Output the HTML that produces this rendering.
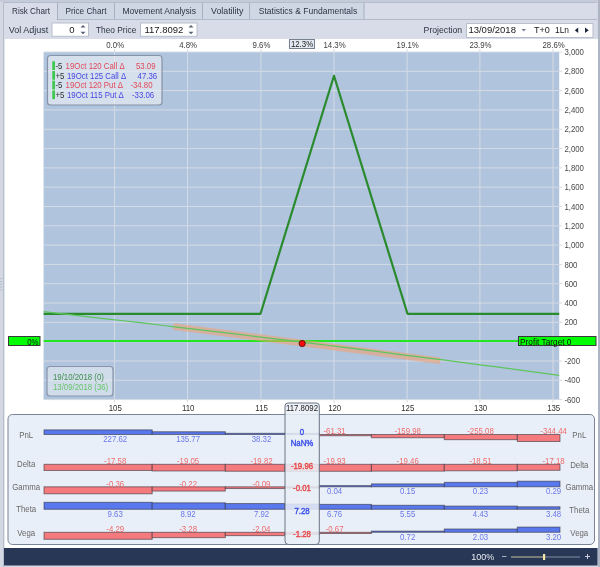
<!DOCTYPE html>
<html><head><meta charset="utf-8"><style>
html,body{margin:0;padding:0;width:600px;height:567px;overflow:hidden;background:#fff}
svg{display:block;will-change:transform}
text{font-family:"Liberation Sans", sans-serif}
</style></head><body>
<svg width="600" height="567" viewBox="0 0 600 567">
<rect x="0" y="0" width="600" height="567" fill="#d3d8e3" />
<rect x="0" y="0" width="600" height="2" fill="#c5cbd8" />
<rect x="4" y="2" width="593" height="37" fill="#d7dce8" />
<rect x="57" y="2" width="58" height="18" fill="#d0d7e4" />
<line x1="114.5" y1="2" x2="114.5" y2="20" stroke="#a9b1c1" stroke-width="1" />
<rect x="115" y="2" width="88" height="18" fill="#d0d7e4" />
<line x1="202.5" y1="2" x2="202.5" y2="20" stroke="#a9b1c1" stroke-width="1" />
<rect x="203" y="2" width="47" height="18" fill="#d0d7e4" />
<line x1="249.5" y1="2" x2="249.5" y2="20" stroke="#a9b1c1" stroke-width="1" />
<rect x="250" y="2" width="114.5" height="18" fill="#d0d7e4" />
<line x1="364.0" y1="2" x2="364.0" y2="20" stroke="#a9b1c1" stroke-width="1" />
<line x1="57" y1="19.5" x2="597" y2="19.5" stroke="#b2bac9" stroke-width="1" />
<line x1="4" y1="2.5" x2="597" y2="2.5" stroke="#b4bdcb" stroke-width="1" />
<line x1="57.5" y1="2" x2="57.5" y2="20" stroke="#a9b1c1" stroke-width="1" />
<text x="12" y="14.12" font-size="9" fill="#2c3444" text-anchor="start" font-weight="normal"  textLength="38" lengthAdjust="spacingAndGlyphs">Risk Chart</text>
<text x="65.5" y="14.12" font-size="9" fill="#2c3444" text-anchor="start" font-weight="normal"  textLength="41" lengthAdjust="spacingAndGlyphs">Price Chart</text>
<text x="122.5" y="14.12" font-size="9" fill="#2c3444" text-anchor="start" font-weight="normal"  textLength="73.5" lengthAdjust="spacingAndGlyphs">Movement Analysis</text>
<text x="211" y="14.12" font-size="9" fill="#2c3444" text-anchor="start" font-weight="normal"  textLength="32.3" lengthAdjust="spacingAndGlyphs">Volatility</text>
<text x="258.75" y="14.12" font-size="9" fill="#2c3444" text-anchor="start" font-weight="normal"  textLength="98.5" lengthAdjust="spacingAndGlyphs">Statistics &amp; Fundamentals</text>
<line x1="3.5" y1="2" x2="3.5" y2="567" stroke="#b6bdca" stroke-width="1" />
<rect x="598" y="0" width="2" height="567" fill="#adb5c4" />
<rect x="0" y="278" width="2" height="1.1" fill="#b9c1cd" />
<rect x="0" y="281" width="2" height="1.1" fill="#b9c1cd" />
<rect x="0" y="283.8" width="2" height="1.1" fill="#b9c1cd" />
<rect x="0" y="286.6" width="2" height="1.1" fill="#b9c1cd" />
<rect x="0" y="289.3" width="2" height="1.1" fill="#b9c1cd" />
<text x="8.7" y="32.82" font-size="9" fill="#2c3444" text-anchor="start" font-weight="normal" >Vol Adjust</text>
<rect x="52" y="23" width="36.5" height="13.3" fill="#ffffff" stroke="#b8bfcc" stroke-width="1" />
<text x="74.5" y="33.00" font-size="9.5" fill="#202020" text-anchor="end" font-weight="normal" >0</text>
<text x="96" y="32.82" font-size="9" fill="#2c3444" text-anchor="start" font-weight="normal"  textLength="40.3" lengthAdjust="spacingAndGlyphs">Theo Price</text>
<rect x="140.5" y="23" width="56.5" height="13.3" fill="#ffffff" stroke="#b8bfcc" stroke-width="1" />
<text x="144.4" y="33.00" font-size="9.5" fill="#202020" text-anchor="start" font-weight="normal" >117.8092</text>
<path d="M80.5,27.5 L83,25 L85.5,27.5 Z" fill="#566074"/>
<path d="M80.5,31.8 L83,34.3 L85.5,31.8 Z" fill="#566074"/>
<path d="M188.5,27.5 L191,25 L193.5,27.5 Z" fill="#566074"/>
<path d="M188.5,31.8 L191,34.3 L193.5,31.8 Z" fill="#566074"/>
<text x="423.6" y="32.82" font-size="9" fill="#2c3444" text-anchor="start" font-weight="normal"  textLength="38.6" lengthAdjust="spacingAndGlyphs">Projection</text>
<rect x="466.5" y="23.5" width="126.5" height="14" fill="#ffffff" stroke="#b8bfcc" stroke-width="1" />
<text x="468.4" y="33.00" font-size="9.5" fill="#202020" text-anchor="start" font-weight="normal" >13/09/2018</text>
<path d="M521.5,29 L526,29 L523.75,31.5 Z" fill="#7a8292"/>
<text x="534" y="33.00" font-size="9.5" fill="#202020" text-anchor="start" font-weight="normal"  textLength="15.8" lengthAdjust="spacingAndGlyphs">T+0</text>
<text x="555" y="33.00" font-size="9.5" fill="#202020" text-anchor="start" font-weight="normal"  textLength="14" lengthAdjust="spacingAndGlyphs">1Ln</text>
<path d="M578.2,27.5 L574.8,30.3 L578.2,33 Z" fill="#1a2438"/>
<path d="M585,27.5 L588.7,30.3 L585,33 Z" fill="#1a2438"/>
<rect x="4" y="39" width="594" height="509" fill="#ffffff" />
<rect x="4" y="39" width="1" height="509" fill="#e2e6ed" />
<rect x="43.6" y="52" width="515.6" height="347.6" fill="#b0c4de" />
<line x1="43.6" y1="52.0" x2="562.2" y2="52.0" stroke="#d5dbe4" stroke-width="1" />
<line x1="43.6" y1="71.31111111111112" x2="562.2" y2="71.31111111111112" stroke="#d5dbe4" stroke-width="1" />
<line x1="43.6" y1="90.62222222222223" x2="562.2" y2="90.62222222222223" stroke="#d5dbe4" stroke-width="1" />
<line x1="43.6" y1="109.93333333333334" x2="562.2" y2="109.93333333333334" stroke="#d5dbe4" stroke-width="1" />
<line x1="43.6" y1="129.24444444444447" x2="562.2" y2="129.24444444444447" stroke="#d5dbe4" stroke-width="1" />
<line x1="43.6" y1="148.55555555555557" x2="562.2" y2="148.55555555555557" stroke="#d5dbe4" stroke-width="1" />
<line x1="43.6" y1="167.86666666666667" x2="562.2" y2="167.86666666666667" stroke="#d5dbe4" stroke-width="1" />
<line x1="43.6" y1="187.1777777777778" x2="562.2" y2="187.1777777777778" stroke="#d5dbe4" stroke-width="1" />
<line x1="43.6" y1="206.4888888888889" x2="562.2" y2="206.4888888888889" stroke="#d5dbe4" stroke-width="1" />
<line x1="43.6" y1="225.8" x2="562.2" y2="225.8" stroke="#d5dbe4" stroke-width="1" />
<line x1="43.6" y1="245.11111111111114" x2="562.2" y2="245.11111111111114" stroke="#d5dbe4" stroke-width="1" />
<line x1="43.6" y1="264.4222222222222" x2="562.2" y2="264.4222222222222" stroke="#d5dbe4" stroke-width="1" />
<line x1="43.6" y1="283.73333333333335" x2="562.2" y2="283.73333333333335" stroke="#d5dbe4" stroke-width="1" />
<line x1="43.6" y1="303.0444444444445" x2="562.2" y2="303.0444444444445" stroke="#d5dbe4" stroke-width="1" />
<line x1="43.6" y1="322.3555555555556" x2="562.2" y2="322.3555555555556" stroke="#d5dbe4" stroke-width="1" />
<line x1="43.6" y1="341.6666666666667" x2="562.2" y2="341.6666666666667" stroke="#d5dbe4" stroke-width="1" />
<line x1="43.6" y1="360.9777777777778" x2="562.2" y2="360.9777777777778" stroke="#d5dbe4" stroke-width="1" />
<line x1="43.6" y1="380.28888888888895" x2="562.2" y2="380.28888888888895" stroke="#d5dbe4" stroke-width="1" />
<line x1="43.6" y1="399.6" x2="562.2" y2="399.6" stroke="#d5dbe4" stroke-width="1" />
<line x1="114.6" y1="49" x2="114.6" y2="402.5" stroke="#d5dbe4" stroke-width="1" />
<line x1="187.5" y1="49" x2="187.5" y2="402.5" stroke="#d5dbe4" stroke-width="1" />
<line x1="260.9" y1="49" x2="260.9" y2="402.5" stroke="#d5dbe4" stroke-width="1" />
<line x1="334.0" y1="49" x2="334.0" y2="402.5" stroke="#d5dbe4" stroke-width="1" />
<line x1="407.1" y1="49" x2="407.1" y2="402.5" stroke="#d5dbe4" stroke-width="1" />
<line x1="479.9" y1="49" x2="479.9" y2="402.5" stroke="#d5dbe4" stroke-width="1" />
<line x1="553.0" y1="49" x2="553.0" y2="402.5" stroke="#d5dbe4" stroke-width="1" />
<text x="564.4" y="55.11" font-size="8.7" fill="#4a4a4a" text-anchor="start" font-weight="normal" transform="matrix(0.9,0,0,1,56.440,0)" >3,000</text>
<text x="564.4" y="74.43" font-size="8.7" fill="#4a4a4a" text-anchor="start" font-weight="normal" transform="matrix(0.9,0,0,1,56.440,0)" >2,800</text>
<text x="564.4" y="93.74" font-size="8.7" fill="#4a4a4a" text-anchor="start" font-weight="normal" transform="matrix(0.9,0,0,1,56.440,0)" >2,600</text>
<text x="564.4" y="113.05" font-size="8.7" fill="#4a4a4a" text-anchor="start" font-weight="normal" transform="matrix(0.9,0,0,1,56.440,0)" >2,400</text>
<text x="564.4" y="132.36" font-size="8.7" fill="#4a4a4a" text-anchor="start" font-weight="normal" transform="matrix(0.9,0,0,1,56.440,0)" >2,200</text>
<text x="564.4" y="151.67" font-size="8.7" fill="#4a4a4a" text-anchor="start" font-weight="normal" transform="matrix(0.9,0,0,1,56.440,0)" >2,000</text>
<text x="564.4" y="170.98" font-size="8.7" fill="#4a4a4a" text-anchor="start" font-weight="normal" transform="matrix(0.9,0,0,1,56.440,0)" >1,800</text>
<text x="564.4" y="190.29" font-size="8.7" fill="#4a4a4a" text-anchor="start" font-weight="normal" transform="matrix(0.9,0,0,1,56.440,0)" >1,600</text>
<text x="564.4" y="209.60" font-size="8.7" fill="#4a4a4a" text-anchor="start" font-weight="normal" transform="matrix(0.9,0,0,1,56.440,0)" >1,400</text>
<text x="564.4" y="228.91" font-size="8.7" fill="#4a4a4a" text-anchor="start" font-weight="normal" transform="matrix(0.9,0,0,1,56.440,0)" >1,200</text>
<text x="564.4" y="248.23" font-size="8.7" fill="#4a4a4a" text-anchor="start" font-weight="normal" transform="matrix(0.9,0,0,1,56.440,0)" >1,000</text>
<text x="564.4" y="267.54" font-size="8.7" fill="#4a4a4a" text-anchor="start" font-weight="normal" transform="matrix(0.9,0,0,1,56.440,0)" >800</text>
<text x="564.4" y="286.85" font-size="8.7" fill="#4a4a4a" text-anchor="start" font-weight="normal" transform="matrix(0.9,0,0,1,56.440,0)" >600</text>
<text x="564.4" y="306.16" font-size="8.7" fill="#4a4a4a" text-anchor="start" font-weight="normal" transform="matrix(0.9,0,0,1,56.440,0)" >400</text>
<text x="564.4" y="325.47" font-size="8.7" fill="#4a4a4a" text-anchor="start" font-weight="normal" transform="matrix(0.9,0,0,1,56.440,0)" >200</text>
<text x="564.4" y="344.78" font-size="8.7" fill="#4a4a4a" text-anchor="start" font-weight="normal" transform="matrix(0.9,0,0,1,56.440,0)" >0</text>
<text x="564.4" y="364.09" font-size="8.7" fill="#4a4a4a" text-anchor="start" font-weight="normal" transform="matrix(0.9,0,0,1,56.440,0)" >-200</text>
<text x="564.4" y="383.40" font-size="8.7" fill="#4a4a4a" text-anchor="start" font-weight="normal" transform="matrix(0.9,0,0,1,56.440,0)" >-400</text>
<text x="564.4" y="402.71" font-size="8.7" fill="#4a4a4a" text-anchor="start" font-weight="normal" transform="matrix(0.9,0,0,1,56.440,0)" >-600</text>
<text x="115.19999999999999" y="47.61" font-size="8.7" fill="#404040" text-anchor="middle" font-weight="normal" transform="matrix(0.9,0,0,1,11.520,0)" >0.0%</text>
<text x="188.1" y="47.61" font-size="8.7" fill="#404040" text-anchor="middle" font-weight="normal" transform="matrix(0.9,0,0,1,18.810,0)" >4.8%</text>
<text x="261.5" y="47.61" font-size="8.7" fill="#404040" text-anchor="middle" font-weight="normal" transform="matrix(0.9,0,0,1,26.150,0)" >9.6%</text>
<text x="334.6" y="47.61" font-size="8.7" fill="#404040" text-anchor="middle" font-weight="normal" transform="matrix(0.9,0,0,1,33.460,0)" >14.3%</text>
<text x="407.70000000000005" y="47.61" font-size="8.7" fill="#404040" text-anchor="middle" font-weight="normal" transform="matrix(0.9,0,0,1,40.770,0)" >19.1%</text>
<text x="480.5" y="47.61" font-size="8.7" fill="#404040" text-anchor="middle" font-weight="normal" transform="matrix(0.9,0,0,1,48.050,0)" >23.9%</text>
<text x="553.6" y="47.61" font-size="8.7" fill="#404040" text-anchor="middle" font-weight="normal" transform="matrix(0.9,0,0,1,55.360,0)" >28.6%</text>
<text x="115.3" y="411.41" font-size="8.7" fill="#303030" text-anchor="middle" font-weight="normal" transform="matrix(0.9,0,0,1,11.530,0)" >105</text>
<text x="188.2" y="411.41" font-size="8.7" fill="#303030" text-anchor="middle" font-weight="normal" transform="matrix(0.9,0,0,1,18.820,0)" >110</text>
<text x="261.59999999999997" y="411.41" font-size="8.7" fill="#303030" text-anchor="middle" font-weight="normal" transform="matrix(0.9,0,0,1,26.160,0)" >115</text>
<text x="334.7" y="411.41" font-size="8.7" fill="#303030" text-anchor="middle" font-weight="normal" transform="matrix(0.9,0,0,1,33.470,0)" >120</text>
<text x="407.8" y="411.41" font-size="8.7" fill="#303030" text-anchor="middle" font-weight="normal" transform="matrix(0.9,0,0,1,40.780,0)" >125</text>
<text x="480.59999999999997" y="411.41" font-size="8.7" fill="#303030" text-anchor="middle" font-weight="normal" transform="matrix(0.9,0,0,1,48.060,0)" >130</text>
<text x="553.7" y="411.41" font-size="8.7" fill="#303030" text-anchor="middle" font-weight="normal" transform="matrix(0.9,0,0,1,55.370,0)" >135</text>
<rect x="289.5" y="39.5" width="25" height="9" fill="#e4eaf3" stroke="#76808f" stroke-width="1" />
<text x="302" y="47.31" font-size="8.7" fill="#202020" text-anchor="middle" font-weight="normal" transform="matrix(0.9,0,0,1,30.200,0)" >12.3%</text>
<polyline points="43.6,313.8 260.5,313.8 334.0,75.8 407.5,313.8 559.2,313.8" fill="none" stroke="#2a8a2e" stroke-width="2.2" stroke-linejoin="round"/>
<line x1="43.6" y1="341" x2="518" y2="341" stroke="#22e622" stroke-width="2" />
<line x1="173.3" y1="326.5" x2="440.3" y2="360.8" stroke="rgba(245,158,105,0.55)" stroke-width="6.5" />
<polyline points="43.6,311.69 56.5,313.14 69.4,314.60 82.3,316.06 95.2,317.53 108.1,319.01 120.9,320.50 133.8,321.99 146.7,323.49 159.6,325.00 172.5,326.51 185.4,328.04 198.3,329.57 211.2,331.10 224.1,332.65 236.9,334.20 249.8,335.75 262.7,337.32 275.6,338.89 288.5,340.47 301.4,342.06 314.3,343.65 327.2,345.25 340.1,346.86 353.0,348.47 365.9,350.10 378.7,351.73 391.6,353.36 404.5,355.01 417.4,356.66 430.3,358.32 443.2,359.98 456.1,361.65 469.0,363.33 481.9,365.02 494.8,366.71 507.6,368.42 520.5,370.12 533.4,371.84 546.3,373.56 559.2,375.29" fill="none" stroke="#5ec45e" stroke-width="1.25"/>
<rect x="8.5" y="336.5" width="31.5" height="9" fill="#00ff00" stroke="#3a3a3a" stroke-width="1" />
<text x="38.5" y="344.91" font-size="8.7" fill="#101010" text-anchor="end" font-weight="normal" transform="matrix(0.9,0,0,1,3.850,0)" >0%</text>
<rect x="518.5" y="336.5" width="77.5" height="9" fill="#00ff00" stroke="#3a3a3a" stroke-width="1" />
<text x="520" y="344.71" font-size="8.7" fill="#101010" text-anchor="start" font-weight="normal"  textLength="51.5" lengthAdjust="spacingAndGlyphs">Profit Target 0</text>
<circle cx="302.2" cy="343.5" r="3.1" fill="#ff0a0a" stroke="#4a1010" stroke-width="0.9"/>
<rect x="47.5" y="55.5" width="114.5" height="49.5" fill="rgba(236,240,246,0.62)" stroke="#8592a8" stroke-width="1.2" rx="3" />
<rect x="52.3" y="61.3" width="2.7" height="8.7" fill="#3ec84e" />
<text x="55.4" y="69.11" font-size="8.7" fill="#303030" text-anchor="start" font-weight="normal" transform="matrix(0.9,0,0,1,5.540,0)" >-5</text>
<text x="65.6" y="69.11" font-size="8.7" fill="#e2485a" text-anchor="start" font-weight="normal" transform="matrix(0.9,0,0,1,6.560,0)" >19Oct 120 Call Δ</text>
<text x="136" y="69.11" font-size="8.7" fill="#e2485a" text-anchor="start" font-weight="normal" transform="matrix(0.9,0,0,1,13.600,0)" >53.09</text>
<rect x="52.3" y="71.0" width="2.7" height="8.7" fill="#3ec84e" />
<text x="55.4" y="78.81" font-size="8.7" fill="#303030" text-anchor="start" font-weight="normal" transform="matrix(0.9,0,0,1,5.540,0)" >+5</text>
<text x="67" y="78.81" font-size="8.7" fill="#4848e2" text-anchor="start" font-weight="normal" transform="matrix(0.9,0,0,1,6.700,0)" >19Oct 125 Call Δ</text>
<text x="137.6" y="78.81" font-size="8.7" fill="#4848e2" text-anchor="start" font-weight="normal" transform="matrix(0.9,0,0,1,13.760,0)" >47.36</text>
<rect x="52.3" y="80.7" width="2.7" height="8.7" fill="#3ec84e" />
<text x="55.4" y="88.51" font-size="8.7" fill="#303030" text-anchor="start" font-weight="normal" transform="matrix(0.9,0,0,1,5.540,0)" >-5</text>
<text x="65.6" y="88.51" font-size="8.7" fill="#e2485a" text-anchor="start" font-weight="normal" transform="matrix(0.9,0,0,1,6.560,0)" >19Oct 120 Put Δ</text>
<text x="130.4" y="88.51" font-size="8.7" fill="#e2485a" text-anchor="start" font-weight="normal" transform="matrix(0.9,0,0,1,13.040,0)" >-34.80</text>
<rect x="52.3" y="90.39999999999999" width="2.7" height="8.7" fill="#3ec84e" />
<text x="55.4" y="98.21" font-size="8.7" fill="#303030" text-anchor="start" font-weight="normal" transform="matrix(0.9,0,0,1,5.540,0)" >+5</text>
<text x="67" y="98.21" font-size="8.7" fill="#4848e2" text-anchor="start" font-weight="normal" transform="matrix(0.9,0,0,1,6.700,0)" >19Oct 115 Put Δ</text>
<text x="132" y="98.21" font-size="8.7" fill="#4848e2" text-anchor="start" font-weight="normal" transform="matrix(0.9,0,0,1,13.200,0)" >-33.06</text>
<rect x="47" y="366.5" width="66" height="29.5" fill="rgba(236,240,246,0.55)" stroke="#8694ac" stroke-width="1.2" rx="3" />
<text x="53" y="379.61" font-size="8.7" fill="#3e8e4e" text-anchor="start" font-weight="normal" transform="matrix(0.9,0,0,1,5.300,0)" >19/10/2018 (0)</text>
<text x="53" y="389.61" font-size="8.7" fill="#66c46a" text-anchor="start" font-weight="normal" transform="matrix(0.9,0,0,1,5.300,0)" >13/09/2018 (36)</text>
<rect x="8" y="414.5" width="586.5" height="130" fill="#e9eff8" stroke="#7a8494" stroke-width="1" rx="4.5" />
<rect x="44" y="429.8741145047033" width="108.19999999999999" height="4.625885495296713" fill="#5a78ee" stroke="rgba(40,40,50,0.55)" stroke-width="1" />
<rect x="152.2" y="431.74076762280805" width="73.10000000000002" height="2.759232377191964" fill="#5a78ee" stroke="rgba(40,40,50,0.55)" stroke-width="1" />
<rect x="225.3" y="433.3" width="59.69999999999999" height="1.2" fill="#5a78ee" stroke="rgba(40,40,50,0.55)" stroke-width="1" />
<rect x="285" y="433.3" width="34.30000000000001" height="1.2" fill="#5a78ee" stroke="rgba(40,40,50,0.55)" stroke-width="1" />
<rect x="319.3" y="434.5" width="52.099999999999966" height="1.24599349669028" fill="#f47a7e" stroke="rgba(40,40,50,0.55)" stroke-width="1" />
<rect x="371.4" y="434.5" width="72.90000000000003" height="3.2512484032052025" fill="#f47a7e" stroke="rgba(40,40,50,0.55)" stroke-width="1" />
<rect x="444.3" y="434.5" width="72.99999999999994" height="5.183950760654977" fill="#f47a7e" stroke="rgba(40,40,50,0.55)" stroke-width="1" />
<rect x="517.3" y="434.5" width="42.700000000000045" height="7.0" fill="#f47a7e" stroke="rgba(40,40,50,0.55)" stroke-width="1" />
<text x="26.2" y="437.71" font-size="8.7" fill="#686868" text-anchor="middle" font-weight="normal" transform="matrix(0.9,0,0,1,2.620,0)" >PnL</text>
<text x="579.3" y="437.81" font-size="8.7" fill="#686868" text-anchor="middle" font-weight="normal" transform="matrix(0.9,0,0,1,57.930,0)" >PnL</text>
<rect x="44" y="464.3" width="108.19999999999999" height="6.174611138986451" fill="#f47a7e" stroke="rgba(40,40,50,0.55)" stroke-width="1" />
<rect x="152.2" y="464.3" width="73.10000000000002" height="6.690918213748119" fill="#f47a7e" stroke="rgba(40,40,50,0.55)" stroke-width="1" />
<rect x="225.3" y="464.3" width="59.69999999999999" height="6.961364776718515" fill="#f47a7e" stroke="rgba(40,40,50,0.55)" stroke-width="1" />
<rect x="285" y="464.3" width="34.30000000000001" height="7.010536879076769" fill="#f47a7e" stroke="rgba(40,40,50,0.55)" stroke-width="1" />
<rect x="319.3" y="464.3" width="52.099999999999966" height="7.0" fill="#f47a7e" stroke="rgba(40,40,50,0.55)" stroke-width="1" />
<rect x="371.4" y="464.3" width="72.90000000000003" height="6.834922227797291" fill="#f47a7e" stroke="rgba(40,40,50,0.55)" stroke-width="1" />
<rect x="444.3" y="464.3" width="72.99999999999994" height="6.501254390366283" fill="#f47a7e" stroke="rgba(40,40,50,0.55)" stroke-width="1" />
<rect x="517.3" y="464.3" width="42.700000000000045" height="6.03411941796287" fill="#f47a7e" stroke="rgba(40,40,50,0.55)" stroke-width="1" />
<text x="26.2" y="467.51" font-size="8.7" fill="#686868" text-anchor="middle" font-weight="normal" transform="matrix(0.9,0,0,1,2.620,0)" >Delta</text>
<text x="579.3" y="467.61" font-size="8.7" fill="#686868" text-anchor="middle" font-weight="normal" transform="matrix(0.9,0,0,1,57.930,0)" >Delta</text>
<rect x="44" y="486.8" width="108.19999999999999" height="7.0" fill="#f47a7e" stroke="rgba(40,40,50,0.55)" stroke-width="1" />
<rect x="152.2" y="486.8" width="73.10000000000002" height="4.277777777777779" fill="#f47a7e" stroke="rgba(40,40,50,0.55)" stroke-width="1" />
<rect x="225.3" y="486.8" width="59.69999999999999" height="1.75" fill="#f47a7e" stroke="rgba(40,40,50,0.55)" stroke-width="1" />
<rect x="285" y="486.8" width="34.30000000000001" height="1.2" fill="#f47a7e" stroke="rgba(40,40,50,0.55)" stroke-width="1" />
<rect x="319.3" y="485.6" width="52.099999999999966" height="1.2" fill="#5a78ee" stroke="rgba(40,40,50,0.55)" stroke-width="1" />
<rect x="371.4" y="483.8833333333333" width="72.90000000000003" height="2.916666666666667" fill="#5a78ee" stroke="rgba(40,40,50,0.55)" stroke-width="1" />
<rect x="444.3" y="482.3277777777778" width="72.99999999999994" height="4.472222222222222" fill="#5a78ee" stroke="rgba(40,40,50,0.55)" stroke-width="1" />
<rect x="517.3" y="481.1611111111111" width="42.700000000000045" height="5.638888888888889" fill="#5a78ee" stroke="rgba(40,40,50,0.55)" stroke-width="1" />
<text x="26.2" y="490.01" font-size="8.7" fill="#686868" text-anchor="middle" font-weight="normal" transform="matrix(0.9,0,0,1,2.620,0)" >Gamma</text>
<text x="579.3" y="490.11" font-size="8.7" fill="#686868" text-anchor="middle" font-weight="normal" transform="matrix(0.9,0,0,1,57.930,0)" >Gamma</text>
<rect x="44" y="502.3" width="108.19999999999999" height="7.0" fill="#5a78ee" stroke="rgba(40,40,50,0.55)" stroke-width="1" />
<rect x="152.2" y="502.8160955347871" width="73.10000000000002" height="6.483904465212876" fill="#5a78ee" stroke="rgba(40,40,50,0.55)" stroke-width="1" />
<rect x="225.3" y="503.5429906542056" width="59.69999999999999" height="5.757009345794392" fill="#5a78ee" stroke="rgba(40,40,50,0.55)" stroke-width="1" />
<rect x="285" y="504.00820353063347" width="34.30000000000001" height="5.291796469366563" fill="#5a78ee" stroke="rgba(40,40,50,0.55)" stroke-width="1" />
<rect x="319.3" y="504.38618899273104" width="52.099999999999966" height="4.913811007268951" fill="#5a78ee" stroke="rgba(40,40,50,0.55)" stroke-width="1" />
<rect x="371.4" y="505.26573208722743" width="72.90000000000003" height="4.034267912772585" fill="#5a78ee" stroke="rgba(40,40,50,0.55)" stroke-width="1" />
<rect x="444.3" y="506.0798546209761" width="72.99999999999994" height="3.220145379023883" fill="#5a78ee" stroke="rgba(40,40,50,0.55)" stroke-width="1" />
<rect x="517.3" y="506.7704049844237" width="42.700000000000045" height="2.529595015576324" fill="#5a78ee" stroke="rgba(40,40,50,0.55)" stroke-width="1" />
<text x="26.2" y="512.51" font-size="8.7" fill="#686868" text-anchor="middle" font-weight="normal" transform="matrix(0.9,0,0,1,2.620,0)" >Theta</text>
<text x="579.3" y="512.61" font-size="8.7" fill="#686868" text-anchor="middle" font-weight="normal" transform="matrix(0.9,0,0,1,57.930,0)" >Theta</text>
<rect x="44" y="532.3" width="108.19999999999999" height="7.0" fill="#f47a7e" stroke="rgba(40,40,50,0.55)" stroke-width="1" />
<rect x="152.2" y="532.3" width="73.10000000000002" height="5.351981351981352" fill="#f47a7e" stroke="rgba(40,40,50,0.55)" stroke-width="1" />
<rect x="225.3" y="532.3" width="59.69999999999999" height="3.3286713286713288" fill="#f47a7e" stroke="rgba(40,40,50,0.55)" stroke-width="1" />
<rect x="285" y="532.3" width="34.30000000000001" height="2.0885780885780885" fill="#f47a7e" stroke="rgba(40,40,50,0.55)" stroke-width="1" />
<rect x="319.3" y="532.3" width="52.099999999999966" height="1.2" fill="#f47a7e" stroke="rgba(40,40,50,0.55)" stroke-width="1" />
<rect x="371.4" y="531.0999999999999" width="72.90000000000003" height="1.2" fill="#5a78ee" stroke="rgba(40,40,50,0.55)" stroke-width="1" />
<rect x="444.3" y="528.9876456876457" width="72.99999999999994" height="3.312354312354312" fill="#5a78ee" stroke="rgba(40,40,50,0.55)" stroke-width="1" />
<rect x="517.3" y="527.0785547785547" width="42.700000000000045" height="5.221445221445222" fill="#5a78ee" stroke="rgba(40,40,50,0.55)" stroke-width="1" />
<text x="26.2" y="535.51" font-size="8.7" fill="#686868" text-anchor="middle" font-weight="normal" transform="matrix(0.9,0,0,1,2.620,0)" >Vega</text>
<text x="579.3" y="535.61" font-size="8.7" fill="#686868" text-anchor="middle" font-weight="normal" transform="matrix(0.9,0,0,1,57.930,0)" >Vega</text>
<path d="M285,541 L285,406 Q285,403 288,403 L316.3,403 Q319.3,403 319.3,406 L319.3,541 Q319.3,544.5 316,544.5 L288.5,544.5 Q285,544.5 285,541 Z" fill="rgba(233,239,247,0.86)" stroke="#6a7484" stroke-width="1"/>
<text x="302" y="411.41" font-size="8.7" fill="#202020" text-anchor="middle" font-weight="normal" transform="matrix(0.9,0,0,1,30.200,0)" >117.8092</text>
<text x="115.2" y="442.11" font-size="8.7" fill="#6a78ea" text-anchor="middle" font-weight="normal" transform="matrix(0.9,0,0,1,11.520,0)" >227.62</text>
<text x="188.1" y="442.11" font-size="8.7" fill="#6a78ea" text-anchor="middle" font-weight="normal" transform="matrix(0.9,0,0,1,18.810,0)" >135.77</text>
<text x="261.5" y="442.11" font-size="8.7" fill="#6a78ea" text-anchor="middle" font-weight="normal" transform="matrix(0.9,0,0,1,26.150,0)" >38.32</text>
<text x="302" y="435.11" font-size="8.7" fill="#3a4ee8" text-anchor="middle" font-weight="normal" transform="matrix(0.9,0,0,1,30.200,0)" stroke="#3a4ee8" stroke-width="0.4">0</text>
<text x="302" y="445.81" font-size="8.7" fill="#3a4ee8" text-anchor="middle" font-weight="normal" transform="matrix(0.9,0,0,1,30.200,0)" stroke="#3a4ee8" stroke-width="0.4">NaN%</text>
<text x="334.6" y="434.31" font-size="8.7" fill="#ee6a6a" text-anchor="middle" font-weight="normal" transform="matrix(0.9,0,0,1,33.460,0)" >-61.31</text>
<text x="407.7" y="434.31" font-size="8.7" fill="#ee6a6a" text-anchor="middle" font-weight="normal" transform="matrix(0.9,0,0,1,40.770,0)" >-159.98</text>
<text x="480.5" y="434.31" font-size="8.7" fill="#ee6a6a" text-anchor="middle" font-weight="normal" transform="matrix(0.9,0,0,1,48.050,0)" >-255.08</text>
<text x="553.6" y="434.31" font-size="8.7" fill="#ee6a6a" text-anchor="middle" font-weight="normal" transform="matrix(0.9,0,0,1,55.360,0)" >-344.44</text>
<text x="115.2" y="464.11" font-size="8.7" fill="#ee6a6a" text-anchor="middle" font-weight="normal" transform="matrix(0.9,0,0,1,11.520,0)" >-17.58</text>
<text x="188.1" y="464.11" font-size="8.7" fill="#ee6a6a" text-anchor="middle" font-weight="normal" transform="matrix(0.9,0,0,1,18.810,0)" >-19.05</text>
<text x="261.5" y="464.11" font-size="8.7" fill="#ee6a6a" text-anchor="middle" font-weight="normal" transform="matrix(0.9,0,0,1,26.150,0)" >-19.82</text>
<text x="302" y="468.61" font-size="8.7" fill="#e84848" text-anchor="middle" font-weight="normal" transform="matrix(0.9,0,0,1,30.200,0)" stroke="#e84848" stroke-width="0.4">-19.96</text>
<text x="334.6" y="464.11" font-size="8.7" fill="#ee6a6a" text-anchor="middle" font-weight="normal" transform="matrix(0.9,0,0,1,33.460,0)" >-19.93</text>
<text x="407.7" y="464.11" font-size="8.7" fill="#ee6a6a" text-anchor="middle" font-weight="normal" transform="matrix(0.9,0,0,1,40.770,0)" >-19.46</text>
<text x="480.5" y="464.11" font-size="8.7" fill="#ee6a6a" text-anchor="middle" font-weight="normal" transform="matrix(0.9,0,0,1,48.050,0)" >-18.51</text>
<text x="553.6" y="464.11" font-size="8.7" fill="#ee6a6a" text-anchor="middle" font-weight="normal" transform="matrix(0.9,0,0,1,55.360,0)" >-17.18</text>
<text x="115.2" y="486.61" font-size="8.7" fill="#ee6a6a" text-anchor="middle" font-weight="normal" transform="matrix(0.9,0,0,1,11.520,0)" >-0.36</text>
<text x="188.1" y="486.61" font-size="8.7" fill="#ee6a6a" text-anchor="middle" font-weight="normal" transform="matrix(0.9,0,0,1,18.810,0)" >-0.22</text>
<text x="261.5" y="486.61" font-size="8.7" fill="#ee6a6a" text-anchor="middle" font-weight="normal" transform="matrix(0.9,0,0,1,26.150,0)" >-0.09</text>
<text x="302" y="491.11" font-size="8.7" fill="#e84848" text-anchor="middle" font-weight="normal" transform="matrix(0.9,0,0,1,30.200,0)" stroke="#e84848" stroke-width="0.4">-0.01</text>
<text x="334.6" y="494.41" font-size="8.7" fill="#6a78ea" text-anchor="middle" font-weight="normal" transform="matrix(0.9,0,0,1,33.460,0)" >0.04</text>
<text x="407.7" y="494.41" font-size="8.7" fill="#6a78ea" text-anchor="middle" font-weight="normal" transform="matrix(0.9,0,0,1,40.770,0)" >0.15</text>
<text x="480.5" y="494.41" font-size="8.7" fill="#6a78ea" text-anchor="middle" font-weight="normal" transform="matrix(0.9,0,0,1,48.050,0)" >0.23</text>
<text x="553.6" y="494.41" font-size="8.7" fill="#6a78ea" text-anchor="middle" font-weight="normal" transform="matrix(0.9,0,0,1,55.360,0)" >0.29</text>
<text x="115.2" y="516.91" font-size="8.7" fill="#6a78ea" text-anchor="middle" font-weight="normal" transform="matrix(0.9,0,0,1,11.520,0)" >9.63</text>
<text x="188.1" y="516.91" font-size="8.7" fill="#6a78ea" text-anchor="middle" font-weight="normal" transform="matrix(0.9,0,0,1,18.810,0)" >8.92</text>
<text x="261.5" y="516.91" font-size="8.7" fill="#6a78ea" text-anchor="middle" font-weight="normal" transform="matrix(0.9,0,0,1,26.150,0)" >7.92</text>
<text x="302" y="513.61" font-size="8.7" fill="#3a4ee8" text-anchor="middle" font-weight="normal" transform="matrix(0.9,0,0,1,30.200,0)" stroke="#3a4ee8" stroke-width="0.4">7.28</text>
<text x="334.6" y="516.91" font-size="8.7" fill="#6a78ea" text-anchor="middle" font-weight="normal" transform="matrix(0.9,0,0,1,33.460,0)" >6.76</text>
<text x="407.7" y="516.91" font-size="8.7" fill="#6a78ea" text-anchor="middle" font-weight="normal" transform="matrix(0.9,0,0,1,40.770,0)" >5.55</text>
<text x="480.5" y="516.91" font-size="8.7" fill="#6a78ea" text-anchor="middle" font-weight="normal" transform="matrix(0.9,0,0,1,48.050,0)" >4.43</text>
<text x="553.6" y="516.91" font-size="8.7" fill="#6a78ea" text-anchor="middle" font-weight="normal" transform="matrix(0.9,0,0,1,55.360,0)" >3.48</text>
<text x="115.2" y="532.11" font-size="8.7" fill="#ee6a6a" text-anchor="middle" font-weight="normal" transform="matrix(0.9,0,0,1,11.520,0)" >-4.29</text>
<text x="188.1" y="532.11" font-size="8.7" fill="#ee6a6a" text-anchor="middle" font-weight="normal" transform="matrix(0.9,0,0,1,18.810,0)" >-3.28</text>
<text x="261.5" y="532.11" font-size="8.7" fill="#ee6a6a" text-anchor="middle" font-weight="normal" transform="matrix(0.9,0,0,1,26.150,0)" >-2.04</text>
<text x="302" y="536.61" font-size="8.7" fill="#e84848" text-anchor="middle" font-weight="normal" transform="matrix(0.9,0,0,1,30.200,0)" stroke="#e84848" stroke-width="0.4">-1.28</text>
<text x="334.6" y="532.11" font-size="8.7" fill="#ee6a6a" text-anchor="middle" font-weight="normal" transform="matrix(0.9,0,0,1,33.460,0)" >-0.67</text>
<text x="407.7" y="539.91" font-size="8.7" fill="#6a78ea" text-anchor="middle" font-weight="normal" transform="matrix(0.9,0,0,1,40.770,0)" >0.72</text>
<text x="480.5" y="539.91" font-size="8.7" fill="#6a78ea" text-anchor="middle" font-weight="normal" transform="matrix(0.9,0,0,1,48.050,0)" >2.03</text>
<text x="553.6" y="539.91" font-size="8.7" fill="#6a78ea" text-anchor="middle" font-weight="normal" transform="matrix(0.9,0,0,1,55.360,0)" >3.20</text>
<rect x="4" y="548" width="593.5" height="17.5" fill="#283756" />
<text x="471.2" y="560.02" font-size="9" fill="#e8ecf2" text-anchor="start" font-weight="normal" >100%</text>
<line x1="502" y1="556.5" x2="506.5" y2="556.5" stroke="#aab2c0" stroke-width="1" />
<line x1="511" y1="557" x2="544" y2="557" stroke="#d8d0a0" stroke-width="0.9" />
<line x1="544" y1="557" x2="580" y2="557" stroke="#9098a8" stroke-width="0.9" />
<rect x="543" y="554" width="2.2" height="6" fill="#f2eaa8" />
<line x1="585" y1="556.5" x2="590" y2="556.5" stroke="#c8ced8" stroke-width="1" />
<line x1="587.5" y1="554" x2="587.5" y2="559" stroke="#c8ced8" stroke-width="1" />
</svg>
</body></html>
